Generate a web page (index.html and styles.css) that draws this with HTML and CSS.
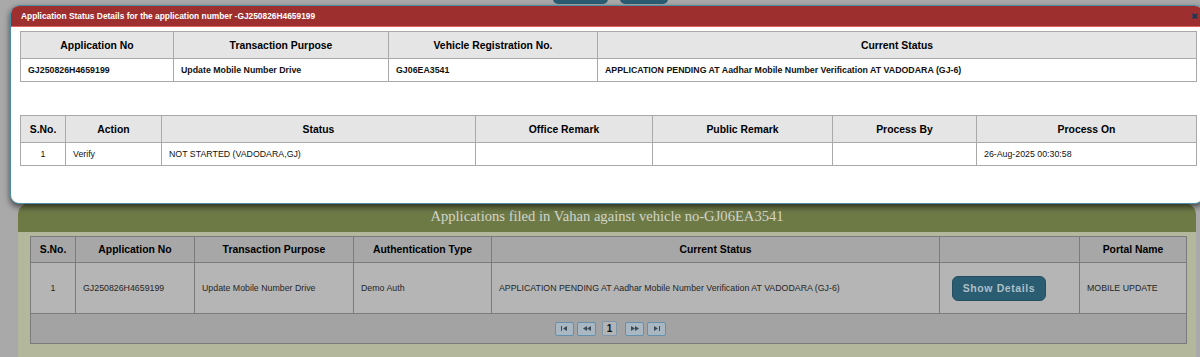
FILE: index.html
```html
<!DOCTYPE html>
<html lang="en">
<head>
    <meta charset="UTF-8">
    <meta name="viewport" content="width=device-width, initial-scale=1.0">
    <title>Application Status</title>
    <link rel="stylesheet" href="styles.css">
</head>
<body>
    <div class="page">
        <div class="topbar">
            <span class="top-btn"></span>
            <span class="top-btn narrow"></span>
        </div>

        <section class="panel">
            <h2 class="panel-title">Applications filed in Vahan against vehicle no-GJ06EA3541</h2>
            <div class="panel-body">
                <table class="grid">
                    <colgroup>
                        <col style="width:45px"><col style="width:119px"><col style="width:159px"><col style="width:138px">
                        <col style="width:448px"><col style="width:140px"><col style="width:107px">
                    </colgroup>
                    <thead>
                        <tr>
                            <th>S.No.</th>
                            <th>Application No</th>
                            <th>Transaction Purpose</th>
                            <th>Authentication Type</th>
                            <th>Current Status</th>
                            <th></th>
                            <th>Portal Name</th>
                        </tr>
                    </thead>
                    <tbody>
                        <tr>
                            <td class="center">1</td>
                            <td>GJ250826H4659199</td>
                            <td>Update Mobile Number Drive</td>
                            <td>Demo Auth</td>
                            <td>APPLICATION PENDING AT Aadhar Mobile Number Verification AT VADODARA (GJ-6)</td>
                            <td class="btn-cell"><button class="details-btn">Show Details</button></td>
                            <td>MOBILE UPDATE</td>
                        </tr>
                    </tbody>
                    <tfoot>
                        <tr>
                            <td colspan="7" class="pager-cell">
                                <div class="pager">
                                    <span class="pg-btn">
                                        <svg width="7" height="5" viewBox="0 0 7 5"><rect x="0" y="0" width="1" height="5" fill="#3b4b58"/><path d="M6 0 L2 2.5 L6 5 Z" fill="#3b4b58"/></svg>
                                    </span>
                                    <span class="pg-btn">
                                        <svg width="8" height="5" viewBox="0 0 8 5"><path d="M4 0 L0 2.5 L4 5 Z M8 0 L4 2.5 L8 5 Z" fill="#3b4b58"/></svg>
                                    </span>
                                    <span class="pg-num">1</span>
                                    <span class="pg-btn">
                                        <svg width="8" height="5" viewBox="0 0 8 5"><path d="M0 0 L4 2.5 L0 5 Z M4 0 L8 2.5 L4 5 Z" fill="#3b4b58"/></svg>
                                    </span>
                                    <span class="pg-btn">
                                        <svg width="7" height="5" viewBox="0 0 7 5"><path d="M1 0 L5 2.5 L1 5 Z" fill="#3b4b58"/><rect x="6" y="0" width="1" height="5" fill="#3b4b58"/></svg>
                                    </span>
                                </div>
                            </td>
                        </tr>
                    </tfoot>
                </table>
            </div>
        </section>
    </div>

    <!-- status dialog on top of the page -->
    <div class="modal">
        <div class="modal-head">
            <span>Application Status Details for the application number -GJ250826H4659199</span>
            <span class="close">&#10006;</span>
        </div>
        <div class="modal-body">
            <table class="info">
                <colgroup>
                    <col style="width:153px"><col style="width:215px"><col style="width:209px"><col style="width:599px">
                </colgroup>
                <tr>
                    <th>Application No</th>
                    <th>Transaction Purpose</th>
                    <th>Vehicle Registration No.</th>
                    <th>Current Status</th>
                </tr>
                <tr class="bold">
                    <td>GJ250826H4659199</td>
                    <td>Update Mobile Number Drive</td>
                    <td>GJ06EA3541</td>
                    <td>APPLICATION PENDING AT Aadhar Mobile Number Verification AT VADODARA (GJ-6)</td>
                </tr>
            </table>

            <table class="info steps">
                <colgroup>
                    <col style="width:45px"><col style="width:96px"><col style="width:314px"><col style="width:177px">
                    <col style="width:180px"><col style="width:144px"><col style="width:220px">
                </colgroup>
                <tr>
                    <th>S.No.</th>
                    <th>Action</th>
                    <th>Status</th>
                    <th>Office Remark</th>
                    <th>Public Remark</th>
                    <th>Process By</th>
                    <th>Process On</th>
                </tr>
                <tr>
                    <td class="center">1</td>
                    <td>Verify</td>
                    <td>NOT STARTED (VADODARA,GJ)</td>
                    <td></td>
                    <td></td>
                    <td></td>
                    <td>26-Aug-2025 00:30:58</td>
                </tr>
            </table>
        </div>
    </div>
</body>
</html>
```

FILE: styles.css
```css
body { margin: 0; height: 357px; overflow: hidden; background-color: #a9a9a9; font-family: "Liberation Sans", Arial, sans-serif; color: #222; }
.page { position: relative; }

.topbar { height: 4px; overflow: hidden; display: flex; align-items: flex-end; gap: 12px; padding-left: 553px; }
.top-btn { display: block; width: 55px; height: 14px; flex: none; background-color: #2a5d72; border-radius: 5px; }
.top-btn.narrow { width: 48px; }

.panel { margin: 199px 4px 0 18px; border-radius: 12px 12px 0 0; background-color: #b3b79b; overflow: hidden; }
.panel-title { margin: 0; height: 29px; line-height: 27px; background-color: #6e7a46; color: #d2d4cb; font-family: "Liberation Serif", Georgia, serif; font-weight: normal; font-size: 14.6px; text-align: center; }
.panel-body { padding: 4px 10px 20px 12px; }

.grid { border-collapse: collapse; table-layout: fixed; width: 1156px; font-size: 8.8px; }
.grid th, .grid td { border: 1px solid #7b7b7b; padding: 0 7px; text-align: left; }
.grid th { height: 25px; background-color: #a7a7a7; color: #000; font-size: 10.4px; text-align: center; }
.grid tbody td { height: 50px; background-color: #b5b5b5; color: #262626; }
.grid .center { text-align: center; }
.grid .btn-cell { padding-left: 12px; }
.pager-cell { height: 29px; background-color: #a3a3a3; }
.pager { display: flex; justify-content: center; align-items: center; gap: 3px; padding-left: 4px; }
.pg-btn { display: flex; align-items: center; justify-content: center; width: 17px; height: 12px; border: 1px solid #6390ad; border-radius: 2px; background-color: #a9b7c2; }
.pg-num { width: 13px; height: 13px; margin: 0 3px; border: 1px solid #7e97aa; border-radius: 2px; background-color: #b4b4b4; color: #111; font-weight: bold; font-size: 10px; line-height: 13px; text-align: center; }
.pg-num + .pg-btn { margin-left: 2px; }

.details-btn { width: 94px; height: 25px; border: 1px solid #244f60; border-radius: 6px; background-color: #2a5d72; color: #aebfc6; font-family: "Liberation Sans", Arial, sans-serif; font-weight: bold; font-size: 10.5px; letter-spacing: 0.6px; }

.modal { position: absolute; top: 5px; left: 10px; width: 1192px; height: 197px; background-color: #fff; border: 1px solid #4b8ea6; border-radius: 9px; box-shadow: 0 3px 6px rgba(0,0,0,0.6); overflow: hidden; }
.modal-head { display: flex; justify-content: space-between; align-items: center; height: 20px; padding: 0 5px 0 10px; background-color: #9d2f2f; border-bottom: 1px solid #df6363; color: #fff; font-weight: bold; font-size: 8.4px; }
.close { color: #173a5c; font-size: 8px; }
.modal-body { padding: 4px 9px 0 9px; }

.info { border-collapse: collapse; table-layout: fixed; width: 1176px; font-size: 8.8px; }
.info th, .info td { border: 1px solid #a9a9a9; padding: 0 7px; text-align: left; color: #111; }
.info th { height: 26px; background-color: #e5e5e5; color: #000; font-size: 10.4px; text-align: center; }
.info td { height: 22px; }
.info .bold td { font-weight: bold; }
.info .center { text-align: center; }
.steps { margin-top: 33px; }
```
